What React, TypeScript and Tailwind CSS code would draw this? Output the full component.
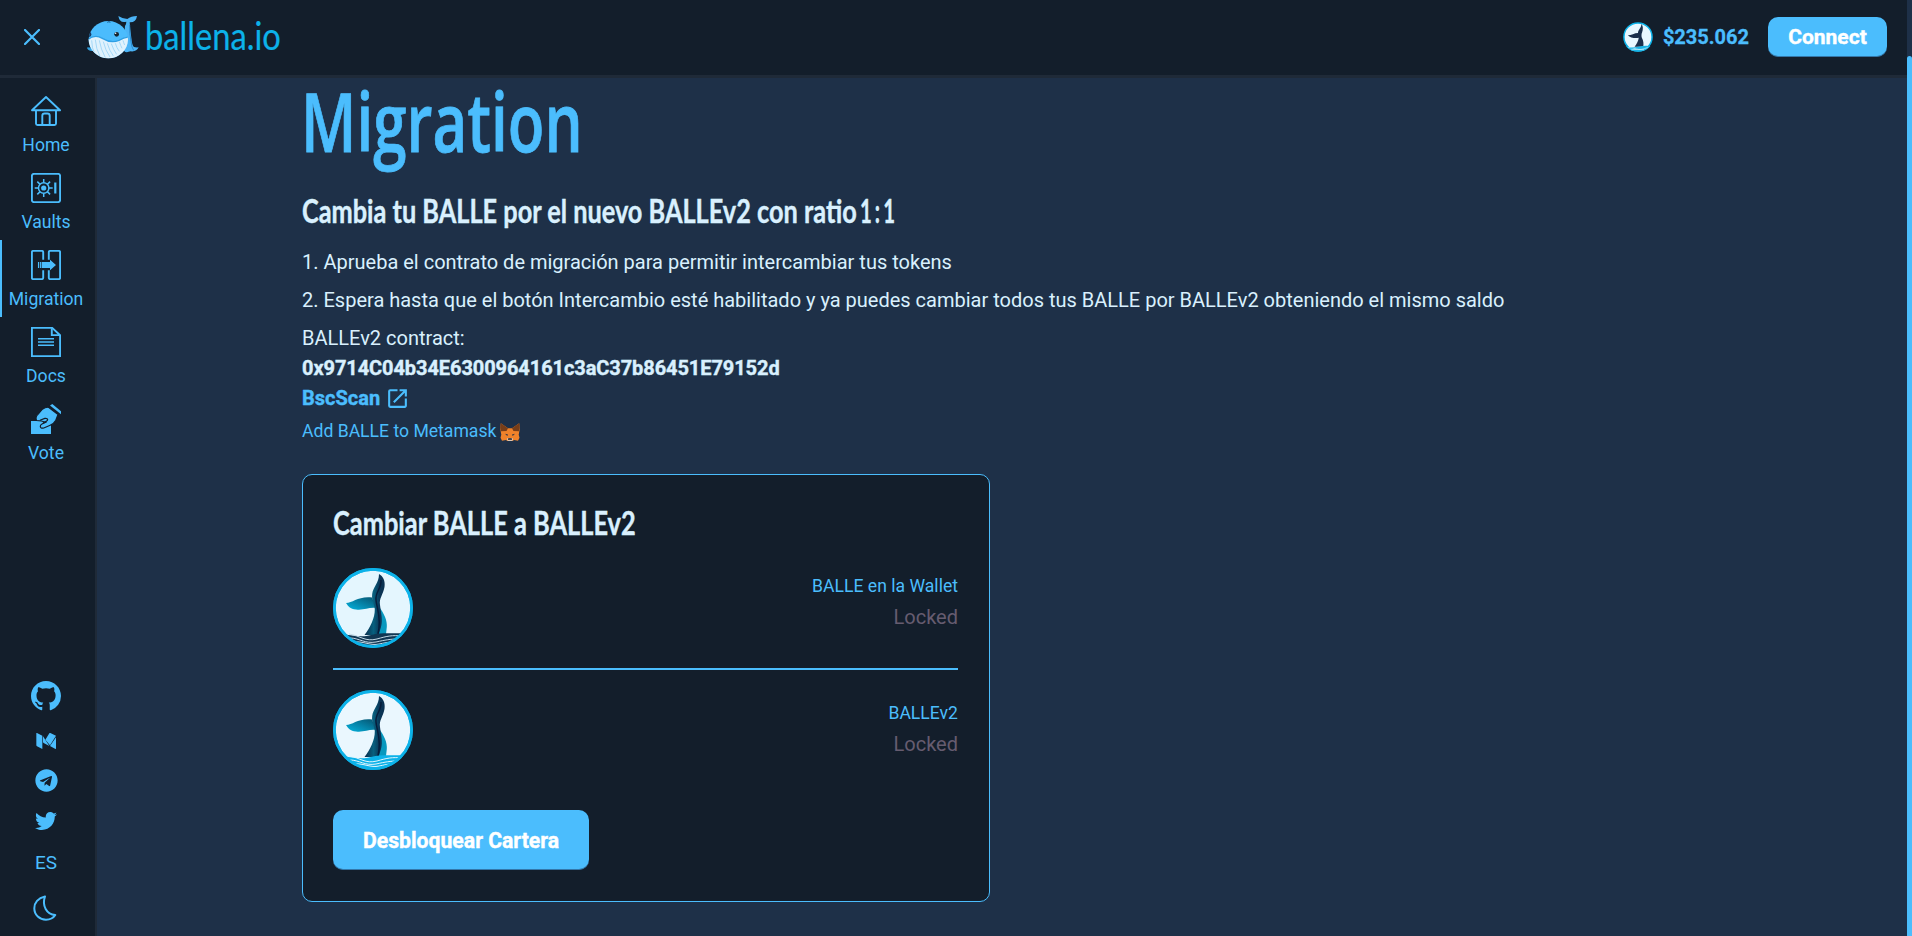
import React, { useLayoutEffect, useRef, useState } from "react";
import { MdOpenInNew } from "react-icons/md";
import { FaTelegram, FaTwitter } from "react-icons/fa";

/** Condenses a line of text horizontally so that it takes exactly `width` pixels. */
function Condensed({ width, children }: { width: number; children: React.ReactNode }) {
  const ref = useRef<HTMLSpanElement>(null);
  const [scale, setScale] = useState(0.77);
  useLayoutEffect(() => {
    if (ref.current) setScale(width / ref.current.offsetWidth);
  }, [width]);
  return (
    <span ref={ref} className="inline-block origin-left whitespace-nowrap" style={{ transform: `scaleX(${scale})` }}>
      {children}
    </span>
  );
}

const HomeIcon = () => (
  <svg viewBox="0 0 30 30" className="size-[30px]" fill="none" stroke="currentColor" strokeWidth="1.9" strokeLinejoin="round">
    <path d="M15 1 29 14.3H1Z" />
    <path d="M5 14.3v13.2q0 1.5 1.5 1.5h17q1.5 0 1.5-1.5V14.3" />
    <path d="M11.3 29v-9.2q0-2.3 2.3-2.3h2.8q2.3 0 2.3 2.3V29" />
  </svg>
);

const VaultIcon = () => (
  <svg viewBox="0 0 30 30" className="size-[30px]" fill="none" stroke="currentColor" strokeWidth="1.9">
    <rect x="0.9" y="0.9" width="28.2" height="28.2" rx="2" />
    <circle cx="12.7" cy="15" r="5.2" strokeWidth="1.5" />
    <circle cx="12.7" cy="15" r="2.6" fill="currentColor" stroke="none" />
    <g strokeWidth="1.5">
      <path d="M12.7 6v3.8M12.7 20.2V24M3.7 15h3.8M17.9 15h3.8M6.3 8.6l2.8 2.8M16.3 18.6l2.8 2.8M19.1 8.6l-2.8 2.8M9.1 18.6l-2.8 2.8" />
    </g>
    <path d="M24.3 9.5v11" strokeWidth="2.2" />
  </svg>
);

const MigrationIcon = () => (
  <svg viewBox="0 0 30 30" className="size-[30px]" fill="none" stroke="currentColor" strokeWidth="1.9" strokeLinejoin="round">
    <path d="M12.2 9.7V2.2q0-1.3-1.3-1.3H2.2Q.9.9.9 2.2v25.6q0 1.3 1.3 1.3h8.7q1.3 0 1.3-1.3v-7.5" />
    <path d="M17.8 9.7V2.2q0-1.3 1.3-1.3h8.7q1.3 0 1.3 1.3v25.6q0 1.3-1.3 1.3h-8.7q-1.3 0-1.3-1.3v-7.5" />
    <path d="M7.5 12v6M9.4 12v6" strokeWidth="1.1" />
    <path d="M10.6 12h8.4v-2.2l6 5.2-6 5.2V18h-8.4Z" fill="currentColor" stroke="none" />
  </svg>
);

const DocsIcon = () => (
  <svg viewBox="0 0 30 30" className="size-[30px]" fill="none" stroke="currentColor" strokeWidth="1.9">
    <path d="M.9.9h20.3l7.9 7.4v20.8H.9Z" />
    <path d="M20.8 1.2v6.9h7.6" />
    <path d="M7 11.8h16M7 15h16M7 18.2h16" strokeWidth="1.4" />
  </svg>
);

const VoteIcon = () => (
  <svg viewBox="0 0 30 30" className="size-[30px]">
    <path d="M0 17h20v13H0Z" fill="currentColor" />
    <path
      d="M17.5 3.3 27 10.5 24.8 16.2Q22.5 20.3 18.6 21.5L12.8 24Q9.3 24.8 9.3 22.3 9.3 20.8 11 20L14.5 18.3 10.5 17 5.5 16.5Q4 13 7.2 10.1L11.4 5.2Q14.5 3 17.5 3.3Z"
      fill="currentColor"
      stroke="#131e2b"
      strokeWidth="1.2"
    />
    <path d="M9 16.3l4.8-1.9q2.7-.3 2.9 1.2 0 1-1.5 1.800l-3.200 1.700" fill="none" stroke="#131e2b" strokeWidth="1.2" />
    <path d="M21.3 0 30 7.3v3L19 1.600Z" fill="currentColor" />
  </svg>
);

const GithubIcon = () => (
  <svg viewBox="0 0 16 16" className="size-[30px]" fill="currentColor">
    <path d="M8 0C3.58 0 0 3.58 0 8c0 3.54 2.29 6.53 5.47 7.59.4.07.55-.17.55-.38 0-.19-.01-.82-.01-1.49-2.01.37-2.53-.49-2.69-.94-.09-.23-.48-.94-.82-1.13-.28-.15-.68-.52-.01-.53.63-.01 1.08.58 1.23.82.72 1.21 1.87.87 2.33.66.07-.52.28-.87.51-1.07-1.78-.2-3.64-.89-3.64-3.95 0-.87.31-1.59.82-2.15-.08-.2-.36-1.02.08-2.12 0 0 .67-.21 2.2.82.64-.18 1.32-.27 2-.27s1.36.09 2 .27c1.53-1.04 2.2-.82 2.2-.82.44 1.1.16 1.92.08 2.12.51.56.82 1.27.82 2.15 0 3.07-1.87 3.75-3.65 3.95.29.25.54.73.54 1.48 0 1.07-.01 1.93-.01 2.2 0 .21.15.46.55.38A8.01 8.01 0 0 0 16 8c0-4.42-3.58-8-8-8" />
  </svg>
);

const MediumIcon = () => (
  <svg viewBox="0 0 60 48" className="h-4 w-5" fill="currentColor">
    <path d="M1 1q0-2 2-1l16 8v40L3 40q-2-1-2-3Z" />
    <path d="M21 10 40 39 23 30q-2-1-2-3Z" />
    <path d="M40 1q1-2 3-1l17 8L42 37 28 20Z" />
    <path d="M60 13v33q0 3-3 1l-15-8Z" />
  </svg>
);

const MoonIcon = () => (
  <svg viewBox="0 0 24 26" className="h-[26px] w-6" fill="none" stroke="currentColor" strokeWidth="2" strokeLinejoin="round">
    <path d="M12 1.5C5 3 1.3 8 1.3 13.2 1.3 20 6.7 24.7 13 24.7c3.8 0 7.3-1.6 9.3-4.7C13.5 19.5 8.8 10.5 12 1.5Z" />
  </svg>
);

const FoxIcon = () => (
  <svg viewBox="0 0 20 18" className="h-[18px] w-5">
    <path d="M.8.3 8 5.3h4L19.2.3l.5 6-1 5.5.8 3-1.5 3-4-.8-2 1.5H8L6 17l-4 .8-1.5-3 .8-3-1-5.5Z" fill="#f0822a" />
    <path d="M.8.3 8 5.3 6.5 8 1 8.3.3 5ZM19.2.3 12 5.3 13.5 8l5.500.3.7-3.300Z" fill="#773d18" />
    <path d="M5 10.8l3 .8-.7 1.4ZM15 10.8l-3 .8.7 1.4Z" fill="#2b3347" />
    <path d="M7.5 15h5l.5 2-1.2 1H8.2L7 17Z" fill="#d8c6b8" />
    <path d="M8.3 15.2h3.4l.4 1.5H7.9Z" fill="#1f1a1c" />
  </svg>
);

function Token({ sea, lines, bg, id }: { sea: string; lines: string; bg: string; id: string }) {
  return (
    <svg viewBox="0 0 80 80" className="size-20 shrink-0">
      <defs>
        <linearGradient id={id + "a"} x1="0" x2="1" y1="1" y2="0">
          <stop offset="0" stopColor="#04b4e0" />
          <stop offset="1" stopColor="#06526f" />
        </linearGradient>
        <linearGradient id={id + "b"} x1="0" x2="1">
          <stop offset="0" stopColor="#0a2d4d" />
          <stop offset="0.45" stopColor="#07607f" />
          <stop offset="0.75" stopColor="#0a3556" />
          <stop offset="1" stopColor="#0b3050" />
        </linearGradient>
        <clipPath id={id + "c"}>
          <circle cx="40" cy="40" r="38" />
        </clipPath>
      </defs>
      <circle cx="40" cy="40" r="38.6" fill={bg} stroke="#0cb2e9" strokeWidth="2.7" />
      <path d="M13 35C20 35 25 28 39 29.5L43 40C36 39 31 42.5 23 41.5 17 41 15 38 13 35Z" fill={"url(#" + id + "a)"} />
      <path d="M46 39C51 45 54.5 53 53.8 59L53 66H43Z" fill="#0798be" />
      <path d="M46 6C50 8 52.5 13 51.5 19 50 27 46 30 47 37 48 45 50 52 48 59L45.5 67H31.5C37 60 42 50 41.8 41 41 35 38.5 33 39.2 26 40 19 46 15 46 6Z" fill={"url(#" + id + "b)"} />
      <path d="M48 12C49 20 42 24 43 32 43.5 40 49 50 45 66" fill="none" stroke="#071c3a" strokeWidth="1.5" />
      <g clipPath={"url(#" + id + "c)"}>
        <path d="M8 66C20 67 28 70 38 67 50 64 60 66 72 65V80H8Z" fill={sea} />
        <g fill="none" stroke={lines} strokeWidth="1">
          <path d="M16 66C28 68 32 74 44 71 54 68 60 67 68 68" />
          <path d="M17 70C26 70 32 76 43 74 52 72 58 71 64 71" />
          <path d="M22 74C30 73 38 78 46 76 51 75 55 74 60 74" />
        </g>
      </g>
      <circle cx="40" cy="40" r="38.6" fill="none" stroke="#0cb2e9" strokeWidth="2.7" />
    </svg>
  );
}

const SmallToken = () => (
  <svg viewBox="0 0 80 80" className="size-[30px]">
    <circle cx="40" cy="40" r="37.5" fill="#e9f7fe" stroke="#0cb2e9" strokeWidth="4" />
    <path d="M49 5C54 10 54 20 51 27 49 32 49 36 50 41 55 50 55 58 54 66H31C37 58 41 50 42 42 32 44 19 42 13 35 22 35 31 29 40 29 40 20 49 16 49 5Z" fill="#1b2f4b" />
    <path d="M7 64Q24 70 40 66T73 64Q62 79 40 79T7 64Z" fill="#19b4e6" />
    <path d="M14 68q12 0 22 4t30-4M22 74q16-2 34 0" stroke="#bfeaf8" strokeWidth="2" fill="none" />
  </svg>
);

const WhaleLogo = () => (
  <svg viewBox="0 0 156 132" className="h-11 w-[52px]">
    <defs>
      <clipPath id="whale">
        <ellipse cx="64" cy="74" rx="59" ry="56" />
      </clipPath>
    </defs>
    <path d="M1 97q8 0 14 3l4 8q-14 0-18-7Z" fill="#2f9fdf" />
    <path d="M118 20Q98 26 94 3q12 8 27 9Q132 3 150 3q-3 20-22 19 1 20 5 46 2 24 8 28 6 2 14 1-6 14-24 12-22 8-22-10l5-66q4-5 4-13Z" fill="#4bb4f6" />
    <path d="M128 30q-1 25 4 50 2 18 8 26" stroke="#278bd0" strokeWidth="3" fill="none" />
    <ellipse cx="64" cy="74" rx="59" ry="56" fill="#4bbcfd" />
    <g clipPath="url(#whale)">
      <path d="M0 76Q22 56 46 70 72 86 96 76 114 66 128 66V136H0Z" fill="#dff2fd" />
      <path d="M0 76Q22 56 46 70 72 86 96 76 114 66 128 66" fill="none" stroke="#2f9fe4" strokeWidth="4" />
      <g fill="none" stroke="#a4d8f7" strokeWidth="3">
        <path d="M14 76q0 24 10 42M25 74q2 28 14 50M37 76q4 26 18 52M49 80q6 26 20 46M61 85q6 22 18 38M73 86q6 18 16 32M85 85q4 14 12 24M97 80q4 12 8 20M108 76q2 8 5 14" />
      </g>
      <ellipse cx="8" cy="58" rx="5" ry="8" fill="#183a63" />
    </g>
    <circle cx="89" cy="58" r="7" fill="#17242f" />
    <circle cx="86" cy="55" r="2.2" fill="#fff" />
    <path d="M61 22q5-4 9 0" stroke="#1b5685" strokeWidth="3" fill="none" />
  </svg>
);

const nav = [
  { label: "Home", icon: <HomeIcon /> },
  { label: "Vaults", icon: <VaultIcon /> },
  { label: "Migration", icon: <MigrationIcon />, active: true },
  { label: "Docs", icon: <DocsIcon /> },
  { label: "Vote", icon: <VoteIcon /> },
];

export default function App() {
  return (
    <div className="flex h-[936px] w-[1912px] overflow-hidden bg-[#1e3048] font-[Roboto,sans-serif] text-[20px] leading-[30px] text-[#d9f0fe]">
      <div className="flex w-[1907px] flex-col">
        <header className="flex h-[78px] shrink-0 items-center border-b-[3px] border-[#1f2a38] bg-[#131e2b] pb-[2px] pl-6 pr-5">
          <svg viewBox="0 0 16 16" className="size-4 text-[#4bbdfd]" fill="none" stroke="currentColor" strokeWidth="2.2" strokeLinecap="round">
            <path d="M1 1l14 14M15 1 1 15" />
          </svg>
          <div className="ml-[47px] flex items-center">
            <WhaleLogo />
            <div className="ml-[6px] h-12 w-[137px] font-[Lato,sans-serif] text-[38px] leading-[45px] text-[#0cb2e9] [-webkit-text-stroke:0.2px_#0cb2e9]">
              <Condensed width={136}>ballena.io</Condensed>
            </div>
          </div>
          <div className="ml-auto flex items-center">
            <SmallToken />
            <span className="ml-[10px] font-bold text-[#4bbdfd] [-webkit-text-stroke:0.3px_#4bbdfd]">$235.062</span>
            <button className="ml-[19px] h-10 w-[119px] rounded-[10px] bg-[#4bbdfd] text-[21px] font-bold text-white shadow-[inset_0_-1px_0_rgba(14,14,44,0.4)] [-webkit-text-stroke:0.4px_#ffffff]">
              Connect
            </button>
          </div>
        </header>

        <div className="flex min-h-0 flex-1">
          <aside className="flex w-[97px] shrink-0 flex-col border-r-2 border-[#1f2a38] bg-[#131e2b] pt-2 text-[#4bbdfd]">
            <nav className="flex flex-col">
              {nav.map((n) => (
                <a
                  key={n.label}
                  className={
                    n.active
                      ? "flex h-[77px] w-[92px] flex-col items-center border-l-2 border-[#4bbdfd] pr-0.5 pt-[10px]"
                      : "flex h-[77px] w-[92px] flex-col items-center pt-[10px]"
                  }
                >
                  {n.icon}
                  <span className="mt-[6px] text-[17.6px] leading-[27px]">{n.label}</span>
                </a>
              ))}
            </nav>
            <div className="mt-auto flex w-[92px] flex-col items-center pb-[15px]">
              <GithubIcon />
              <span className="mt-[22px] flex h-4"><MediumIcon /></span>
              <FaTelegram className="mt-[20px] size-[23px]" />
              <FaTwitter className="mt-[18px] size-[22px]" />
              <span className="mt-4 text-[19px] leading-[30px]">ES</span>
              <span className="mt-[17px] flex -translate-x-px"><MoonIcon /></span>
            </div>
          </aside>

          <main className="flex flex-1 flex-col items-start pl-[205px]">
            <h1 className="h-[83px] w-[280px] font-['Open_Sans',sans-serif] text-[81px] font-semibold leading-[86px] text-[#4bbdfd] [-webkit-text-stroke:0.8px_#4bbdfd]">
              <span className="-ml-px block">
                <Condensed width={282}>Migration</Condensed>
              </span>
            </h1>
            <h2 className="mt-[30px] flex h-10 w-[600px] font-[Lato,sans-serif] text-[32px] font-bold leading-10 [-webkit-text-stroke:0.4px_#d9f0fe]">
              <span className="w-[558px]">
                <Condensed width={555}>Cambia tu BALLE por el nuevo BALLEv2 con ratio</Condensed>
              </span>
              <span className="[word-spacing:-3px]">
                <Condensed width={35}>1 : 1</Condensed>
              </span>
            </h2>
            <p className="mt-[16px]">1. Aprueba el contrato de migración para permitir intercambiar tus tokens</p>
            <p className="mt-2">
              2. Espera hasta que el botón Intercambio esté habilitado y ya puedes cambiar todos tus BALLE por BALLEv2 obteniendo el mismo saldo
            </p>
            <p className="mt-[8px]">BALLEv2 contract:</p>
            <p className="font-bold tracking-[-0.08px] [-webkit-text-stroke:0.4px_#d9f0fe]">0x9714C04b34E6300964161c3aC37b86451E79152d</p>
            <a className="flex items-center font-bold text-[#4bbdfd]">
              <span className="[-webkit-text-stroke:0.4px_#4bbdfd]">BscScan</span> <MdOpenInNew className="ml-[5px] size-[25px]" />
            </a>
            <a className="mt-[5px] flex items-center text-[17.6px] leading-[27px] text-[#4bbdfd]">
              <span>Add BALLE to Metamask</span>
              <span className="ml-1 flex"><FoxIcon /></span>
            </a>

            <section className="mt-[29px] h-[428px] w-[688px] rounded-[10px] border border-[#4bbdfd] bg-[#131e2b] pl-[30px] pr-[31px] pt-7">
              <h2 className="h-10 w-[310px] font-[Lato,sans-serif] text-[32px] font-bold leading-10 [-webkit-text-stroke:0.4px_#d9f0fe]">
                <Condensed width={303}>Cambiar BALLE a BALLEv2</Condensed>
              </h2>
              <div className="mt-[25px] flex justify-between">
                <Token id="t1" bg="#e4f6fe" sea="#103652" lines="#c3d9e6" />
                <div className="flex flex-col items-end pt-[5px]">
                  <span className="text-[17.6px] leading-[27px] text-[#4bbdfd]">BALLE en la Wallet</span>
                  <span className="mt-[2px] text-[#665c70]">Locked</span>
                </div>
              </div>
              <div className="mb-5 mt-5 h-0.5 bg-[#4bbdfd]" />
              <div className="flex justify-between">
                <Token id="t2" bg="#eaf7fe" sea="#0cb2e9" lines="#e3f6fd" />
                <div className="flex flex-col items-end pt-[10px]">
                  <span className="text-[17.6px] leading-[27px] text-[#4bbdfd]">BALLEv2</span>
                  <span className="mt-[2px] text-[#665c70]">Locked</span>
                </div>
              </div>
              <button className="mt-10 h-[60px] w-64 rounded-[10px] bg-[#4bbdfd] pt-px text-[21.2px] font-bold text-white shadow-[inset_0_-1px_0_rgba(14,14,44,0.4)] [-webkit-text-stroke:0.4px_#ffffff]">
                Desbloquear Cartera
              </button>
            </section>
          </main>
        </div>
      </div>
      <div className="w-[5px] pt-14">
        <div className="h-full rounded-t-[4px] bg-[#4bbdfd]" />
      </div>
    </div>
  );
}
